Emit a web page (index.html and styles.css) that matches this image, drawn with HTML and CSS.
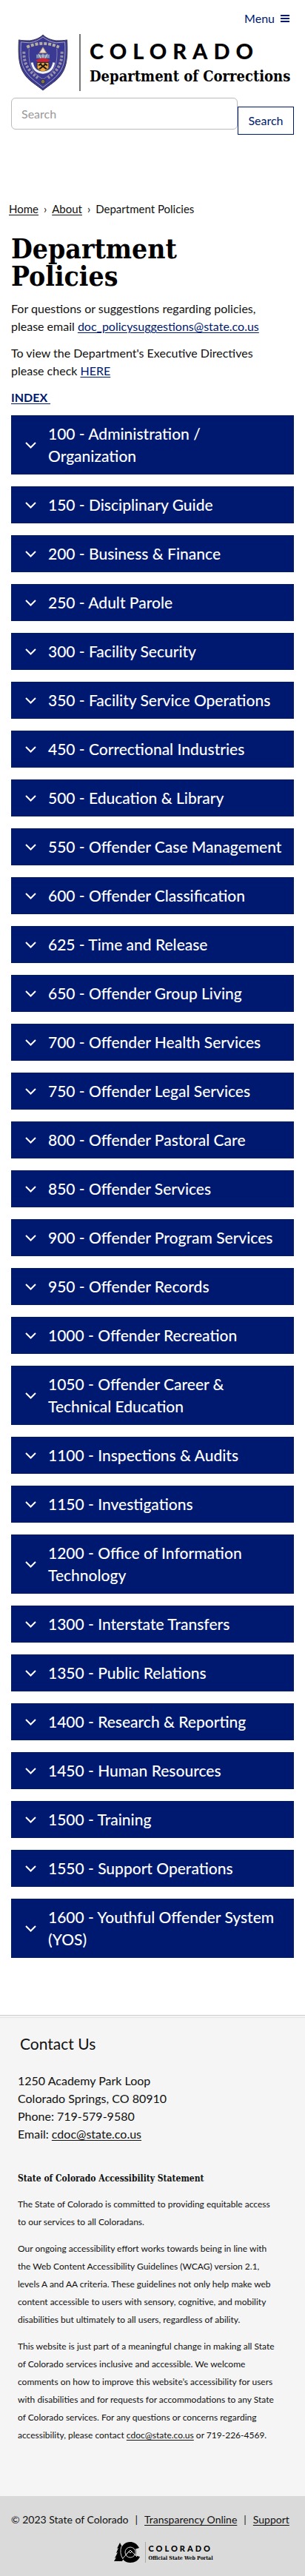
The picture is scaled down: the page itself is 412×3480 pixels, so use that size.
FILE: index.html
```html
<!DOCTYPE html>
<html lang="en">
<head>
<meta charset="utf-8">
<meta name="viewport" content="width=device-width, initial-scale=1">
<title>Department Policies | Department of Corrections</title>
<link rel="stylesheet" href="styles.css">
</head>
<body>
<header class="site-header">
  <button class="menu-toggle" type="button">Menu
    <svg class="menu-icon" viewBox="0 0 12 12" aria-hidden="true"><path d="M0 2h12M0 6h12M0 10h12"/></svg>
  </button>
  <a class="brand" href="#">
    <svg class="badge" viewBox="0 0 68 78" role="img" aria-label="Department of Corrections badge">
      <path d="M34 1C29 6 23 8 16 9C10 9 5 9 1 8C0 30 1 43 8 54C14 64 26 70 34 77C42 70 54 64 60 54C67 43 68 30 67 8C63 9 58 9 52 9C45 8 39 6 34 1Z" fill="#3a3a94" stroke="#3c3a50"/>
      <path d="M34 4C29 8 23 11 16 12L4 11C3 30 4 42 11 52C17 61 27 67 34 73C41 67 51 61 57 52C64 42 65 30 64 11L52 12C45 11 39 8 34 4Z" fill="none" stroke="#aaa6b4"/>
      <path d="M15 20C14 34 16 45 22 52C26 57 31 60 34 62C37 60 42 57 46 52C52 45 54 34 53 20" fill="none" stroke="#8b86a4"/>
      <path d="M12 18Q34 8 56 18" fill="none" stroke="#b9b09c" stroke-width="4" stroke-dasharray="4 2"/>
      <path d="M8 24C8 38 11 48 27 60M60 24C60 38 57 48 41 60" fill="none" stroke="#9a93a6" stroke-width="4" stroke-dasharray="3 2"/>
      <path d="M34 18L29 26H39Z" fill="#e8dfd8" stroke="#a98a66"/>
      <path d="M25 28H43V33H25Z" fill="#8296b4"/>
      <path d="M28 27L31 33M34 27V33M40 27L37 33" stroke="#ddd" fill="none"/>
      <path d="M24 36Q34 30 44 36L40 38H27Z" fill="#d3222b"/>
      <path d="M26 39H42V46Q41 50 34 52Q27 50 26 46Z" fill="#eda43a" stroke="#34302f"/>
      <path d="M29 48L38 41M39 48L30 41M28 43L32 40M36 40L40 43" stroke="#1d1b1b" stroke-width="2"/>
      <path d="M19 39C21 50 27 52 34 53C41 52 47 50 49 39" fill="none" stroke="#eef3fa" stroke-width="3"/>
      <circle cx="34" cy="65" r="3" fill="#827844" stroke="#25244d"/>
    </svg>
    <span class="brand-text">
      <span class="brand-state">COLORADO</span>
      <span class="brand-name">Department of Corrections</span>
    </span>
  </a>
  <form class="search" role="search">
    <input class="search-input" type="search" placeholder="Search" aria-label="Search">
    <button class="search-button" type="button">Search</button>
  </form>
</header>

<nav class="breadcrumb" aria-label="Breadcrumb">
  <a href="#">Home</a><span>›</span><a href="#">About</a><span>›</span><span>Department Policies</span>
</nav>

<main class="content">
  <h1 class="page-title">Department Policies</h1>
  <p>For questions or suggestions regarding policies, please email <a href="#">doc_policysuggestions@state.co.us</a></p>
  <p>To view the Department's Executive Directives please check <a href="#">HERE</a></p>
  <p><a class="index-link" href="#">INDEX&nbsp;</a></p>
  <div class="accordion" id="policies"></div>
</main>

<footer>
  <div class="footer-main">
    <h2 class="contact-title">Contact Us</h2>
    <address class="contact">1250 Academy Park Loop<br>Colorado Springs, CO 80910<br>Phone: 719-579-9580<br>Email: <a href="#">cdoc@state.co.us</a></address>
    <section class="statement">
      <h3 class="statement-title">State of Colorado Accessibility Statement</h3>
      <p>The State of Colorado is committed to providing equitable access to our services to all Coloradans.</p>
      <p>Our ongoing accessibility effort works towards being in line with the Web Content Accessibility Guidelines (WCAG) version 2.1, levels A and AA criteria. These guidelines not only help make web content accessible to users with sensory, cognitive, and mobility disabilities but ultimately to all users, regardless of ability.</p>
      <p>This website is just part of a meaningful change in making all State of Colorado services inclusive and accessible. We welcome comments on how to improve this website’s accessibility for users with disabilities and for requests for accommodations to any State of Colorado services. For any questions or concerns regarding accessibility, please contact <a href="#">cdoc@state.co.us</a> or 719-226-4569.</p>
    </section>
  </div>
  <div class="footer-bar">
    <div class="legal"><span>© 2023 State of Colorado</span><span>|</span><a href="#">Transparency Online</a><span>|</span><a href="#">Support</a></div>
    <a class="portal" href="#">
      <svg class="portal-mark" viewBox="0 0 36 28" role="img" aria-label="Colorado">
        <path d="M8 1L4 9L6 8L3 15L5 14L1 22L3 21L0 26H11L14 20L12 9Z"/>
        <path d="M34 8C31 2 26 0 22 0C14 0 9 6 9 14S14 28 22 28C28 28 33 25 35 20L28 18C24 23 16 20 16 14S24 5 28 10L34 8Z"/>
        <circle cx="22" cy="14" r="8"/>
        <g fill="none" stroke="#dadada"><path d="M10 6Q7 15 12 23M12 22L22 11L31 20"/><circle cx="22" cy="14" r="7"/><path d="M16 17L22 11L28 17M20 13L22 15L24 13"/></g>
      </svg>
      <span class="portal-text"><span class="portal-state">COLORADO</span><span class="portal-name">Official State Web Portal</span></span>
    </a>
  </div>
</footer>
<script src="script.js"></script>
</body>
</html>
```
FILE: styles.css
```css
* { box-sizing: border-box; }
body {
  margin: 0;
  background: #fff;
  color: #111;
  font: 16px/24px Lato, sans-serif;
}
button, input { font: inherit; }
a { color: #001970; text-underline-offset: 2px; }
p { margin: 0 0 12px; }

.site-header {
  display: flex;
  flex-direction: column;
  padding: 13px 15px 0;
}
.menu-toggle {
  display: flex;
  align-items: center;
  align-self: flex-end;
  gap: 8px;
  margin-right: 6px;
  padding: 0;
  border: 0;
  background: none;
  color: #001970;
}
.menu-icon { width: 12px; height: 12px; stroke: #001970; stroke-width: 2; }
.brand {
  display: flex;
  gap: 15px;
  margin: 9px 0 9px 9px;
  color: #000;
  text-decoration: none;
}
.badge { width: 68px; height: 77px; flex: none; }
.brand-text {
  display: flex;
  flex-direction: column;
  gap: 4px;
  padding: 7px 0 0 12px;
  border-left: 2px solid #777;
  white-space: nowrap;
}
.brand-state { font-size: 29px; line-height: 32px; font-weight: 900; letter-spacing: 8px; }
.brand-name { font: bold 20px/28px "DejaVu Serif Condensed", "DejaVu Serif", serif; }
.search { display: flex; align-items: flex-start; }
.search-input {
  flex: 1;
  min-width: 0;
  height: 43px;
  padding: 0 13px;
  border: 1px solid #bbb;
  border-radius: 6px;
  background: #fff;
}
.search-input::placeholder { color: #999; }
.search-button {
  width: 76px;
  height: 38px;
  margin-top: 12px;
  padding: 0;
  border: 1px solid #001970;
  background: #fff;
  color: #001970;
}

.breadcrumb {
  display: flex;
  gap: 7px;
  padding: 88px 12px 0;
  font-size: 15px;
}
.breadcrumb a { color: #111; }

.content { padding: 24px 15px 0; }
.content p { max-width: 364px; }
.page-title {
  max-width: 280px;
  margin: 0 0 13px;
  color: #000;
  font: bold 37px/37px "DejaVu Serif Condensed", "DejaVu Serif", serif;
}
.index-link { font-weight: 700; }
.accordion { display: flex; flex-direction: column; gap: 16px; }
.accordion-heading { margin: 0; font-weight: 500; }
.accordion-button {
  display: flex;
  align-items: center;
  gap: 16px;
  width: 100%;
  padding: 10px 15px 10px 19px;
  border: 0;
  background: #001970;
  color: #fff;
  font-size: 21px;
  line-height: 30px;
  text-align: left;
}
.chevron { flex: none; width: 15px; height: 9px; fill: none; stroke: #fff; stroke-width: 2; }

.footer-main {
  margin-top: 77px;
  padding: 24px;
  border-top: 1px solid #ccc;
  background: #f5f5f5;
  box-shadow: inset 0 2px #f5f5f5, inset 0 3px #e4e4e4;
}
.footer-main a, .legal a { color: #111; }
.contact-title { margin: 0 3px 24px; font-size: 21px; line-height: 28px; font-weight: 400; }
.contact { font-style: normal; }
.statement { max-width: 352px; padding: 36px 0 34px; font-size: 12px; }
.statement-title { margin: 0 0 11px; font: bold 12px/24px "DejaVu Serif Condensed", "DejaVu Serif", serif; }
.footer-bar { padding: 20px 15px 18px; background: #dadada; }
.legal { display: flex; gap: 9px; font-size: 14px; white-space: nowrap; }
.portal {
  display: flex;
  justify-content: center;
  gap: 6px;
  margin: 18px 0 0 30px;
  color: #000;
  text-decoration: none;
}
.portal-mark { width: 36px; height: 28px; }
.portal-text {
  display: flex;
  flex-direction: column;
  padding: 2px 0 0 3px;
  border-left: 1px solid #aaa;
}
.portal-state { font-size: 11px; line-height: 13px; font-weight: 900; letter-spacing: 3px; }
.portal-name { font: bold 7px/13px "DejaVu Serif Condensed", "DejaVu Serif", serif; }
```
FILE: script.js
```js
const policies = [
  "100 - Administration / Organization",
  "150 - Disciplinary Guide",
  "200 - Business & Finance",
  "250 - Adult Parole",
  "300 - Facility Security",
  "350 - Facility Service Operations",
  "450 - Correctional Industries",
  "500 - Education & Library",
  "550 - Offender Case Management",
  "600 - Offender Classification",
  "625 - Time and Release",
  "650 - Offender Group Living",
  "700 - Offender Health Services",
  "750 - Offender Legal Services",
  "800 - Offender Pastoral Care",
  "850 - Offender Services",
  "900 - Offender Program Services",
  "950 - Offender Records",
  "1000 - Offender Recreation",
  "1050 - Offender Career & Technical Education",
  "1100 - Inspections & Audits",
  "1150 - Investigations",
  "1200 - Office of Information Technology",
  "1300 - Interstate Transfers",
  "1350 - Public Relations",
  "1400 - Research & Reporting",
  "1450 - Human Resources",
  "1500 - Training",
  "1550 - Support Operations",
  "1600 - Youthful Offender System (YOS)"
];
const chevron = '<svg class="chevron" viewBox="0 0 15 9" aria-hidden="true"><path d="M1 1l6.5 6.5L14 1"/></svg>';
const list = document.getElementById("policies");
for (const title of policies) {
  const heading = document.createElement("h2");
  heading.className = "accordion-heading";
  heading.innerHTML = '<button class="accordion-button" type="button" aria-expanded="false">' + chevron + "<span></span></button>";
  heading.querySelector("span").textContent = title;
  list.append(heading);
}
```
